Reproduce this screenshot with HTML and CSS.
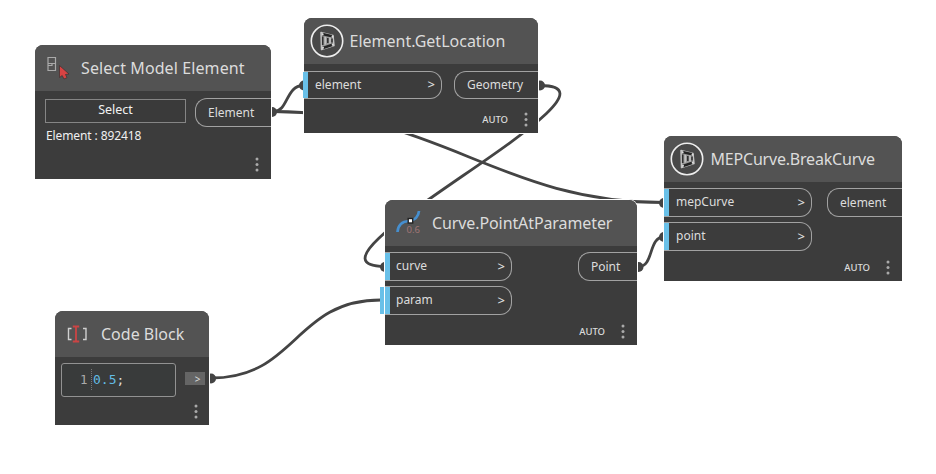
FILE: index.html
```html
<!DOCTYPE html>
<html lang="en">
<head>
<meta charset="utf-8">
<title>Node graph</title>
<link rel="stylesheet" href="styles.css">
</head>
<body>
<svg width="0" height="0" class="defs" aria-hidden="true">
  <symbol id="package" viewBox="0 0 34 34">
    <circle cx="17" cy="17" r="15.7" fill="#484848" stroke="#eee" stroke-width="1.6"/>
    <path d="M11 8.500 23 11.500 24 21.500 11.500 25.500Z" fill="#999" stroke="#c4c4c4" stroke-width="1.500" stroke-linejoin="round"/>
    <path d="M12.500 10 22 12.200M13 24 22.500 20.800" fill="none" stroke="#242424" stroke-width="2.500"/>
    <path d="M12.700 12.500V21M22 14.500V18.500M17.800 14V19" fill="none" stroke="#303030" stroke-width="1.600"/>
    <path d="M15.200 13V20.500M20 13.500V19.500" fill="none" stroke="#d0d0d0" stroke-width="1.100"/>
    <g fill="#ddd"><circle cx="12.700" cy="10.300" r="1"/><circle cx="22.500" cy="12.500" r="1"/><circle cx="22.700" cy="20.700" r="1"/><circle cx="13" cy="23.700" r="1"/></g>
  </symbol>
  <symbol id="dots" viewBox="0 0 4 15"><g fill="#aaa"><circle cx="2" cy="2" r="1.5"/><circle cx="2" cy="7.5" r="1.5"/><circle cx="2" cy="13" r="1.5"/></g></symbol>
</svg>
<main class="canvas">
  <svg class="wires" viewBox="0 0 936 474">
    <g class="wire">
      <path d="M274 111.500C288 111.500 286 85.500 303 85.500"/>
      <path d="M274 111.500C440 111.500 498 202.500 664 202.500"/>
      <path d="M540 85.500C648 85.500 277 266.500 385 266.500"/>
      <path d="M639 266.500C654 266.500 648 237 664 237"/>
      <path d="M211 378C297 378 294 300 381 300"/>
    </g>
    <g class="ends">
      <circle cx="272" cy="112" r="5"/><circle cx="304" cy="85.500" r="5"/>
      <circle cx="540" cy="85.500" r="5"/><circle cx="385" cy="267" r="5"/>
      <circle cx="638.500" cy="267" r="5"/><circle cx="664" cy="203" r="5"/>
      <circle cx="664" cy="237" r="5"/><circle cx="211" cy="378.500" r="5"/>
    </g>
  </svg>

  <section class="node select-node">
    <header>
      <svg class="icon" viewBox="0 0 34 34"><path d="M7 6.500H14.500V19.500H7ZM7 12.500H14.500M7 14.500H11V12.500" fill="none" stroke="#aaa" stroke-width="1.200"/><path d="M18.500 14.500V26.500L21.200 24.500 23 28 26 26.700 24.500 23.500 28 23Z" fill="#d84343" stroke="#3b3030" stroke-width=".7"/></svg>
      <h2>Select Model Element</h2>
    </header>
    <div class="body">
      <div class="picker"><button>Select</button><p>Element : 892418</p></div>
      <div class="port out">Element</div>
    </div>
    <footer><svg class="menu"><use href="#dots"/></svg></footer>
  </section>

  <section class="node location-node">
    <header><svg class="icon"><use href="#package"/></svg><h2>Element.GetLocation</h2></header>
    <div class="body">
      <div class="inputs"><div class="port in wide-bar"><span>element</span><b>&gt;</b></div></div>
      <div class="port out">Geometry</div>
    </div>
    <footer><span>AUTO</span><svg class="menu"><use href="#dots"/></svg></footer>
  </section>

  <section class="node curve-node">
    <header>
      <svg class="icon" viewBox="0 0 34 34"><path d="M6.500 26C7 19 11 15.500 18 15 24 14 27.500 11 28 5" fill="none" stroke="#468fcf" stroke-width="2.700"/><rect x="17.200" y="12.500" width="4.500" height="4.500" fill="#fff" stroke="#222" stroke-width="1.400"/><text x="15.500" y="27.300" class="value">0.6</text></svg>
      <h2>Curve.PointAtParameter</h2>
    </header>
    <div class="body">
      <div class="inputs"><div class="port in"><span>curve</span><b>&gt;</b></div><div class="port in active"><span>param</span><b>&gt;</b></div></div>
      <div class="port out">Point</div>
    </div>
    <footer><span>AUTO</span><svg class="menu"><use href="#dots"/></svg></footer>
  </section>

  <section class="node break-node">
    <header><svg class="icon"><use href="#package"/></svg><h2>MEPCurve.BreakCurve</h2></header>
    <div class="body">
      <div class="inputs"><div class="port in"><span>mepCurve</span><b>&gt;</b></div><div class="port in"><span>point</span><b>&gt;</b></div></div>
      <div class="port out">element</div>
    </div>
    <footer><span>AUTO</span><svg class="menu"><use href="#dots"/></svg></footer>
  </section>

  <section class="node code-node">
    <header>
      <svg class="icon" viewBox="0 0 34 34"><path d="M10.500 11.500H7.500V22.500H10.500M22 11.500H25V22.500H22" fill="none" stroke="#d0d0d0" stroke-width="1.400"/><path d="M11.800 9.500H18.200M11.800 24.500H18.200M15 9.500V24.500" fill="none" stroke="#cb4444" stroke-width="1.800"/></svg>
      <h2>Code Block</h2>
    </header>
    <div class="body">
      <code><span class="line">1</span><span class="number">0.5</span>;</code>
      <span class="code-out">&gt;</span>
    </div>
    <footer><svg class="menu"><use href="#dots"/></svg></footer>
  </section>
</main>
</body>
</html>
```
FILE: styles.css
```css
* { box-sizing: border-box; }
body { margin: 0; background: #fff; font-family: "Noto Sans", sans-serif; }
.defs { position: absolute; }
.canvas { position: relative; width: 936px; height: 474px; overflow: hidden; }
.wires { position: absolute; inset: 0; width: 936px; height: 474px; }
.wire { fill: none; stroke: #444; stroke-width: 2.8; }
.ends { fill: #444; }

.node {
  position: absolute;
  display: flex;
  flex-direction: column;
  background: #3c3c3c;
  color: #dcdcdc;
  border-radius: 8px 8px 0 0;
  box-shadow: 0 0 0 1px #fff;
}
.select-node { left: 35px; top: 45px; width: 236px; height: 134px; }
.location-node { left: 304px; top: 18px; width: 234px; height: 115px; }
.curve-node { left: 385px; top: 200px; width: 252px; height: 145px; }
.break-node { left: 664px; top: 136px; width: 238px; height: 145px; }
.code-node { left: 55px; top: 311px; width: 154px; height: 114px; }

header {
  display: flex;
  align-items: center;
  flex: none;
  height: 46px;
  padding-left: 6px;
  background: #535353;
  border-radius: 8px 8px 0 0;
}
.icon { flex: none; width: 34px; height: 34px; }
h2 { margin: 0 0 0 6px; font-size: 16px; font-weight: 400; line-height: 24px; white-space: nowrap; }
.select-node h2 { letter-spacing: .1px; }
.curve-node h2 { letter-spacing: -.1px; margin-left: 7px; }
.break-node h2 { letter-spacing: -.2px; margin-left: 7px; }
.location-node .icon, .break-node .icon { margin-left: -.5px; }
.value { font: 9.5px "Noto Sans", sans-serif; fill: #a07575; }
.body { display: flex; justify-content: space-between; align-items: flex-start; padding-top: 6px; font-size: 12px; }
.inputs { display: flex; flex-direction: column; gap: 5px; }
.port { display: flex; align-items: center; height: 29px; border: 1px solid #a2a2a2; padding-bottom: 1px; }
.in { position: relative; width: 127px; padding: 0 6px 2px 11px; justify-content: space-between; border-left: 0; border-radius: 0 12px 12px 0; }
.in::before { content: ""; position: absolute; left: 0; top: 0; width: 5px; height: 27px; background: #69c0e8; }
.wide-bar::before { left: -1px; }
.active::after { content: ""; position: absolute; left: -5px; top: 0; width: 4px; height: 27px; background: #69c0e8; }
.in b { font-size: 13px; font-weight: 500; }
.out { padding-left: 12px; border-right: 0; border-radius: 12px 0 0 12px; }
.select-node .out { width: 76px; margin-top: 1px; }
.location-node .body { padding-top: 7px; }
.location-node .in { width: 138px; height: 28px; padding-left: 11px; }
.location-node .in::before { height: 26px; }
.location-node .out { width: 84px; height: 28px; }
.curve-node .out { width: 59px; }
.break-node .in { width: 148px; padding-left: 12px; }
.break-node .out { width: 75px; }

.picker { padding: 2px 0 0 10px; }
button { display: block; width: 141px; height: 24px; padding: 0 0 3px; border: 1px solid #858585; background: #3a3a3a; color: #f2f2f2; font: 12.5px "Noto Sans", sans-serif; }
p { margin: 4px 0 0 1px; font-size: 12px; line-height: 17px; letter-spacing: -.1px; color: #f0f0f0; white-space: nowrap; }
footer { display: flex; align-items: center; justify-content: flex-end; gap: 16px; height: 15px; margin: auto 10px 6px 0; font-size: 9.5px; font-weight: 500; }
.select-node footer { margin-bottom: 7px; }
.location-node footer { margin-right: 9px; }
.curve-node footer { margin-right: 11px; }
.break-node footer { margin-right: 11px; }
.menu { width: 4px; height: 15px; margin-right: 1px; }
.select-node .menu { margin-right: 2px; }

code { display: flex; align-items: center; width: 115px; height: 34px; margin-left: 6px; padding: 0 0 2px 18px; border: 1px solid #929292; border-radius: 3px; background: #393b3b; font: 13px "DejaVu Sans Mono", monospace; }
.line { display: flex; align-items: center; width: 12px; height: 21px; margin-right: 1px; border-right: 1px dotted #777; color: #aaa; font-size: 12.5px; }
.number { color: #62bce4; }
.code-out { display: flex; align-items: center; justify-content: center; width: 20px; height: 13px; margin: 9px 4px 0 0; padding-left: 5px; background: #656565; font-size: 10px; }
.code-node footer { margin-right: 10px; }
```
